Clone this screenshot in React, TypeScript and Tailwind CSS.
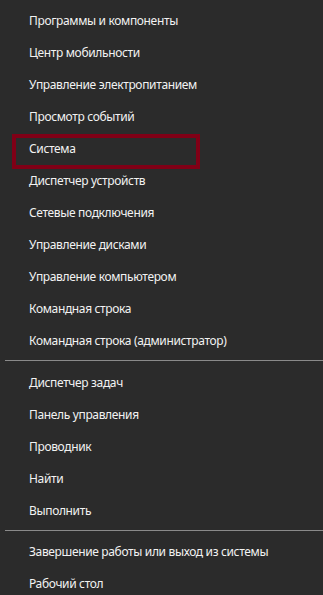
import React from "react";

const group1 = [
  "Программы и компоненты",
  "Центр мобильности",
  "Управление электропитанием",
  "Просмотр событий",
  "Система",
  "Диспетчер устройств",
  "Сетевые подключения",
  "Управление дисками",
  "Управление компьютером",
  "Командная строка",
  "Командная строка (администратор)",
];
const group2 = ["Диспетчер задач", "Панель управления", "Проводник", "Найти", "Выполнить"];
const group3 = ["Завершение работы или выход из системы", "Рабочий стол"];

function Row({ label }: { label: string }) {
  return (
    <div className="relative flex h-8 items-center pl-[29px] pt-[2px]">
      <span>{label}</span>
      {label === "Система" && (
        <div className="absolute left-[12px] top-[2px] h-[35px] w-[188px] border-4 border-[#800016]" />
      )}
    </div>
  );
}

export default function App() {
  return (
    <div
      className="h-[595px] w-[323px] overflow-hidden bg-[#2b2b2b] pt-[4px] text-[12px] tracking-[-0.35px] text-[#f2f2f2]"
      style={{ fontFamily: '"Noto Sans", "Open Sans", sans-serif' }}
    >
      {group1.map((l) => (
        <Row key={l} label={l} />
      ))}
      <div className="ml-[5px] mt-[4px] mb-[5px] h-px bg-[#8a8a8a]" />
      {group2.map((l) => (
        <Row key={l} label={l} />
      ))}
      <div className="ml-[5px] mt-[4px] mb-[4px] h-px bg-[#8a8a8a]" />
      {group3.map((l) => (
        <Row key={l} label={l} />
      ))}
    </div>
  );
}
